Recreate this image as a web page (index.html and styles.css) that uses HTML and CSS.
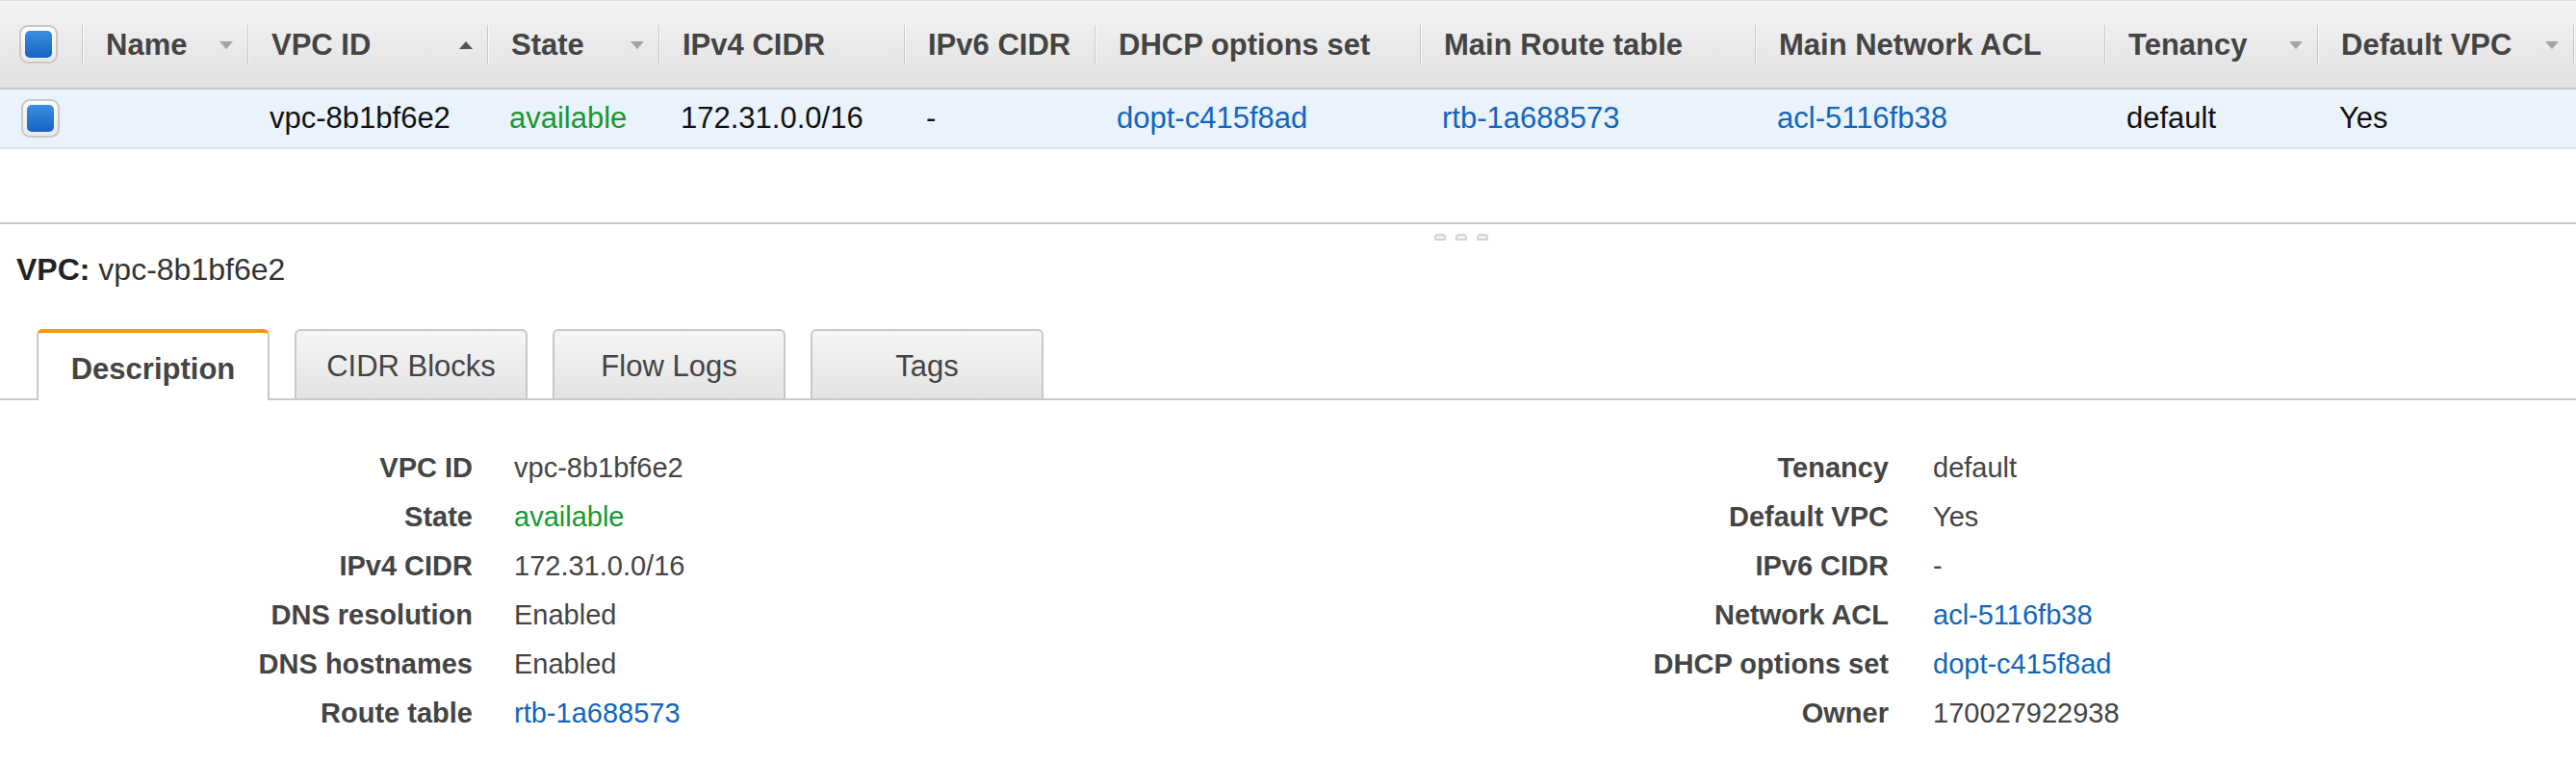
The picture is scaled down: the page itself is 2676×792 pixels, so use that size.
FILE: index.html
```html
<!DOCTYPE html>
<html lang="en">
<head>
<meta charset="utf-8">
<title>VPC</title>
<link rel="stylesheet" href="styles.css">
</head>
<body>
<div class="vgrid">
  <div class="vhead">
    <div class="hc hc-check"><span class="cbox"><span class="cfill"></span></span></div>
    <div class="hc"><div class="hin"><span>Name</span><span class="arr"></span></div></div>
    <div class="hc"><div class="hin"><span>VPC ID</span><span class="arr up"></span></div></div>
    <div class="hc"><div class="hin"><span>State</span><span class="arr"></span></div></div>
    <div class="hc"><div class="hin"><span>IPv4 CIDR</span></div></div>
    <div class="hc"><div class="hin"><span>IPv6 CIDR</span></div></div>
    <div class="hc"><div class="hin"><span>DHCP options set</span></div></div>
    <div class="hc"><div class="hin"><span>Main Route table</span></div></div>
    <div class="hc"><div class="hin"><span>Main Network ACL</span></div></div>
    <div class="hc"><div class="hin"><span>Tenancy</span><span class="arr"></span></div></div>
    <div class="hc"><div class="hin"><span>Default VPC</span><span class="arr"></span></div></div>
    <div class="hc"><div class="hin"></div></div>
  </div>
  <div class="vrow">
    <div class="dc dc-check"><span class="cbox"><span class="cfill"></span></span></div>
    <div class="dc"></div>
    <div class="dc">vpc-8b1bf6e2</div>
    <div class="dc ok">available</div>
    <div class="dc">172.31.0.0/16</div>
    <div class="dc">-</div>
    <div class="dc"><a class="lnk">dopt-c415f8ad</a></div>
    <div class="dc"><a class="lnk">rtb-1a688573</a></div>
    <div class="dc"><a class="lnk">acl-5116fb38</a></div>
    <div class="dc">default</div>
    <div class="dc">Yes</div>
    <div class="dc"></div>
  </div>
</div>

<div class="splitter">
  <div class="grip"><span class="gdot"></span><span class="gdot"></span><span class="gdot"></span></div>
</div>

<div class="detail">
  <div class="dtitle"><b>VPC:</b> vpc-8b1bf6e2</div>
  <div class="tabs">
    <div class="tab active">Description</div>
    <div class="tab">CIDR Blocks</div>
    <div class="tab">Flow Logs</div>
    <div class="tab">Tags</div>
  </div>
  <div class="props">
    <div class="pl">VPC ID</div><div class="pv">vpc-8b1bf6e2</div>
    <div class="pl">Tenancy</div><div class="pv pv2">default</div>

    <div class="pl">State</div><div class="pv ok">available</div>
    <div class="pl">Default VPC</div><div class="pv pv2">Yes</div>

    <div class="pl">IPv4 CIDR</div><div class="pv">172.31.0.0/16</div>
    <div class="pl">IPv6 CIDR</div><div class="pv pv2">-</div>

    <div class="pl">DNS resolution</div><div class="pv">Enabled</div>
    <div class="pl">Network ACL</div><div class="pv pv2"><a class="lnk">acl-5116fb38</a></div>

    <div class="pl">DNS hostnames</div><div class="pv">Enabled</div>
    <div class="pl">DHCP options set</div><div class="pv pv2"><a class="lnk">dopt-c415f8ad</a></div>

    <div class="pl">Route table</div><div class="pv"><a class="lnk">rtb-1a688573</a></div>
    <div class="pl">Owner</div><div class="pv pv2">170027922938</div>
  </div>
</div>
</body>
</html>
```

FILE: styles.css
```css
* { box-sizing: border-box; }
html, body {
  margin: 0;
  padding: 0;
  background: #fff;
  font-family: "Liberation Sans", Arial, Helvetica, sans-serif;
}
body { width: 2676px; overflow: hidden; }

.vgrid { width: 2676px; }

.vhead, .vrow {
  display: grid;
  grid-template-columns: 85px 172px 249px 178px 255px 198px 338px 348px 363px 221px 266px 1fr;
}

.vhead {
  height: 93px;
  border-top: 1px solid #dcdcdc;
  border-bottom: 2px solid #c9c9c9;
  background: linear-gradient(#f3f3f3, #e2e2e2);
  font-weight: bold;
  font-size: 31px;
  color: #444;
}
.hc {
  display: flex;
  align-items: center;
  min-width: 0;
}
.hc-check { padding-left: 20px; }
.hin {
  flex: 1;
  height: 41px;
  display: flex;
  align-items: center;
  justify-content: space-between;
  padding: 2px 15px 0 24px;
  border-left: 1px solid #c6c6c6;
  box-shadow: inset 1px 0 0 #fafafa;
  white-space: nowrap;
  overflow: hidden;
}
.arr {
  width: 0;
  height: 0;
  border-left: 7px solid transparent;
  border-right: 7px solid transparent;
  border-top: 8px solid #a3a3a3;
  flex: none;
}
.arr.up {
  border-top: 0;
  border-bottom: 8px solid #555;
}

.vrow {
  height: 62px;
  background: #eaf2fc;
  border-bottom: 2px solid #e1e1e1;
  font-size: 31px;
  color: #111;
}
.dc {
  display: flex;
  align-items: center;
  padding-left: 23px;
  white-space: nowrap;
}
.dc-check { padding-left: 22px; }

.cbox {
  width: 40px;
  height: 40px;
  border: 2px solid #c8c8c8;
  border-radius: 9px;
  background: linear-gradient(#fdfdfd, #e9e9e9);
  display: flex;
  align-items: center;
  justify-content: center;
}
.cfill {
  width: 28px;
  height: 28px;
  border-radius: 5px;
  background: linear-gradient(#3d8fe2, #1463c3);
}

.ok { color: #17992f; }
.lnk { color: #1166bb; text-decoration: none; }

.splitter {
  margin-top: 76px;
  border-top: 2px solid #cacaca;
  height: 18px;
  display: flex;
  justify-content: center;
  padding-top: 10px;
}
.grip {
  display: flex;
  gap: 10px;
  margin-left: 360px;
}
.gdot {
  width: 12px;
  height: 7px;
  border: 2px solid #d2d2d2;
  border-radius: 4px 4px 1px 1px;
  background: #f4f4f4;
}

.detail { width: 2676px; }
.dtitle {
  margin-top: 11px;
  padding-left: 17px;
  height: 40px;
  line-height: 40px;
  font-size: 32px;
  color: #333;
}
.dtitle b { color: #222; }

.tabs {
  margin-top: 42px;
  display: flex;
  gap: 26px;
  padding-left: 38px;
  border-bottom: 2px solid #c8c8c8;
  height: 74px;
}
.tab {
  width: 242px;
  height: 72px;
  border: 2px solid #c8c8c8;
  border-bottom: 0;
  border-radius: 6px 6px 0 0;
  background: linear-gradient(#f5f5f5, #e4e4e4);
  display: flex;
  align-items: center;
  justify-content: center;
  font-size: 31px;
  color: #444;
  padding-top: 3px;
}
.tab.active {
  height: 74px;
  background: #fff;
  border-top: 4px solid #ff9900;
  font-weight: bold;
  padding-top: 6px;
}

.props {
  display: grid;
  grid-template-columns: 491px 883px 502px 1fr;
  column-gap: 43px;
  grid-auto-rows: 51px;
  padding-top: 45px;
  font-size: 29px;
  color: #444;
}
.pl {
  text-align: right;
  font-weight: bold;
  line-height: 51px;
  white-space: nowrap;
}
.pv {
  line-height: 51px;
  white-space: nowrap;
}
.pv2 { padding-left: 3px; }
```
